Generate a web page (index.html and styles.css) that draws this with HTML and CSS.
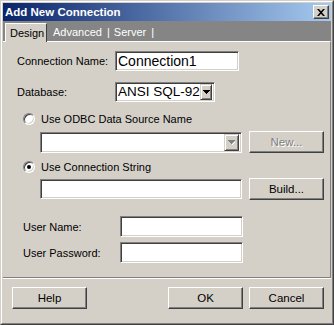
FILE: index.html
```html
<!DOCTYPE html>
<html>
<head>
<meta charset="utf-8">
<link rel="stylesheet" href="styles.css">
</head>
<body>
<div class="window">
  <div class="frame">
    <div class="titlebar">
      <span class="title">Add New Connection</span>
      <div class="close"><svg width="8" height="7" viewBox="0 0 8 7"><path d="M0 0h2l2 2.2 2-2.2h2l-3 3.5 3 3.5h-2l-2-2.2-2 2.2h-2l3-3.5z" fill="#000"/></svg></div>
    </div>
    <div class="tabstrip">
      <div class="tab active">Design</div>
      <span class="tab-label first">Advanced</span><span class="sep">|</span><span class="tab-label">Server</span><span class="sep">|</span>
    </div>
    <div class="panel">
      <div class="row r-name">
        <span class="lbl lbl-wide">Connection Name:</span>
        <div class="sunken big name-input">Connection1</div>
      </div>
      <div class="row r-db">
        <span class="lbl lbl-wide">Database:</span>
        <div class="sunken big select"><span class="sel-text">ANSI SQL-92</span><div class="arrow-btn"><svg width="7" height="4" viewBox="0 0 7 4"><path d="M0 0h7v1h-1v1h-1v1h-1v1h-1v-1h-1v-1h-1v-1h-1z" fill="#000"/></svg></div></div>
      </div>
      <div class="row r-radio1 radio-row">
        <span class="radio"></span><span class="radio-text">Use ODBC Data Source Name</span>
      </div>
      <div class="row r-combo indent">
        <div class="sunken combo disabled"><div class="arrow-btn wide"><svg width="7" height="5" viewBox="0 0 7 5"><path d="M0 0h7v1h-1v1h-1v1h-1v1h-1v-1h-1v-1h-1v-1h-1z" fill="#808080"/><path d="M4 4h1v-1h1v-1h1v1h-1v1h-1v1h-1z" fill="#fff"/></svg></div></div>
        <div class="btn disabled-btn">New...</div>
      </div>
      <div class="row r-radio2 radio-row">
        <span class="radio checked"></span><span class="radio-text">Use Connection String</span>
      </div>
      <div class="row r-conn indent">
        <div class="sunken conn-input"></div>
        <div class="btn">Build...</div>
      </div>
      <div class="row r-user">
        <span class="lbl lbl-user">User Name:</span>
        <div class="sunken user-input"></div>
      </div>
      <div class="row r-pass">
        <span class="lbl lbl-user">User Password:</span>
        <div class="sunken user-input"></div>
      </div>
    </div>
    <div class="footer">
      <div class="btn">Help</div>
      <div class="btn-group">
        <div class="btn">OK</div>
        <div class="btn">Cancel</div>
      </div>
    </div>
  </div>
</div>
</body>
</html>
```
FILE: styles.css
```css
* { box-sizing: border-box; }
body {
  margin: 0;
  font-family: "Liberation Sans", Arial, sans-serif;
  font-size: 11px;
  color: #000;
  background: #d4d0c8;
}
.window {
  width: 334px;
  height: 325px;
  border: 1px solid;
  border-color: #d4d0c8 #404040 #404040 #d4d0c8;
  background: #d4d0c8;
}
.frame {
  height: 100%;
  border: 1px solid;
  border-color: #fff #808080 #808080 #fff;
  padding: 1px;
  display: flex;
  flex-direction: column;
}
.titlebar {
  flex: none;
  height: 18px;
  background: linear-gradient(to right, #0a246a, #a6caf0);
  display: flex;
  align-items: center;
  justify-content: space-between;
  padding: 0 2px;
}
.title {
  color: #fff;
  font-weight: bold;
  font-size: 11.5px;
  line-height: 18px;
}
.close {
  width: 16px;
  height: 14px;
  background: #d4d0c8;
  border: 1px solid;
  border-color: #fff #404040 #404040 #fff;
  box-shadow: inset -1px -1px #808080;
  display: flex;
  align-items: center;
  justify-content: center;
}
.close svg { display: block; }
.tabstrip {
  flex: none;
  height: 20px;
  background: #858585;
  display: flex;
  align-items: flex-end;
  padding-left: 2px;
  color: #fff;
  font-size: 11px;
}
.tab.active {
  position: relative;
  z-index: 1;
  width: 42px;
  height: 19px;
  margin-bottom: -1px;
  background: #d4d0c8;
  color: #000;
  border-top: 1px solid #fff;
  border-left: 1px solid #fff;
  border-right: 1px solid #404040;
  padding-left: 4px;
  line-height: 18px;
}
.tab-label { line-height: 18px; }
.tab-label.first { margin-left: 6px; }
.sep { line-height: 18px; margin: 0 4px 0 5px; }
.panel {
  flex: 1;
  border-top: 1px solid #fff;
  border-right: 1px solid #808080;
  border-bottom: 1px solid #808080;
  padding-left: 14px;
  display: flex;
  flex-direction: column;
}
.row { display: flex; align-items: center; }
.lbl-wide { width: 98px; }
.lbl-user { width: 97px; margin-left: 6px; }
.sunken {
  background: #fff;
  border: 1px solid;
  border-color: #808080 #fff #fff #808080;
  box-shadow: inset 1px 1px #404040, inset -1px -1px #d4d0c8;
}
.big {
  font-size: 14px;
  padding-left: 2px;
  line-height: 18px;
  white-space: nowrap;
}
.r-name { margin-top: 9px; height: 20px; }
.name-input { width: 124px; height: 20px; }
.r-db { margin-top: 11px; height: 20px; }
.select {
  width: 100px;
  height: 20px;
  display: flex;
  align-items: center;
  justify-content: space-between;
  padding: 2px;
}
.sel-text { font-size: 13.5px; line-height: 16px; }
.arrow-btn {
  flex: none;
  width: 12px;
  height: 16px;
  background: #d4d0c8;
  border: 1px solid;
  border-color: #d4d0c8 #404040 #404040 #d4d0c8;
  box-shadow: inset 1px 1px #fff, inset -1px -1px #808080;
  display: flex;
  align-items: center;
  justify-content: center;
}
.arrow-btn svg { display: block; }
.arrow-btn.wide { width: 15px; height: 17px; }
.radio-row { height: 12px; margin-left: 6px; }
.r-radio1 { margin-top: 11px; }
.r-radio2 { margin-top: 8px; }
.radio {
  width: 12px;
  height: 12px;
  border-radius: 50%;
  background: #fff;
  border: 1px solid;
  border-color: #808080 #fff #fff #808080;
  box-shadow: inset 1px 1px #404040, inset -1px -1px #d4d0c8;
  display: flex;
  align-items: center;
  justify-content: center;
}
.radio.checked::after {
  content: "";
  width: 4px;
  height: 4px;
  border-radius: 50%;
  background: #000;
}
.radio-text { margin-left: 6px; line-height: 12px; }
.indent { margin-left: 23px; }
.r-combo { margin-top: 6px; height: 22px; gap: 7px; }
.combo {
  width: 202px;
  height: 21px;
  display: flex;
  justify-content: flex-end;
  align-items: center;
  padding: 2px;
}
.r-conn { margin-top: 5px; height: 22px; gap: 7px; }
.conn-input { width: 202px; height: 20px; }
.btn {
  width: 75px;
  height: 22px;
  background: #d4d0c8;
  border: 1px solid;
  border-color: #fff #404040 #404040 #fff;
  box-shadow: inset -1px -1px #808080;
  display: flex;
  align-items: center;
  justify-content: center;
  font-size: 11.5px;
}
.disabled-btn {
  color: #808080;
  text-shadow: 1px 1px #fff;
}
.r-user { margin-top: 16px; height: 21px; }
.r-pass { margin-top: 5px; height: 21px; }
.user-input { width: 123px; height: 21px; }
.footer {
  flex: none;
  height: 44px;
  border-top: 1px solid #fff;
  padding: 8px 7px 0 9px;
  display: flex;
  justify-content: space-between;
  align-items: flex-start;
}
.btn-group { display: flex; gap: 6px; }
```
